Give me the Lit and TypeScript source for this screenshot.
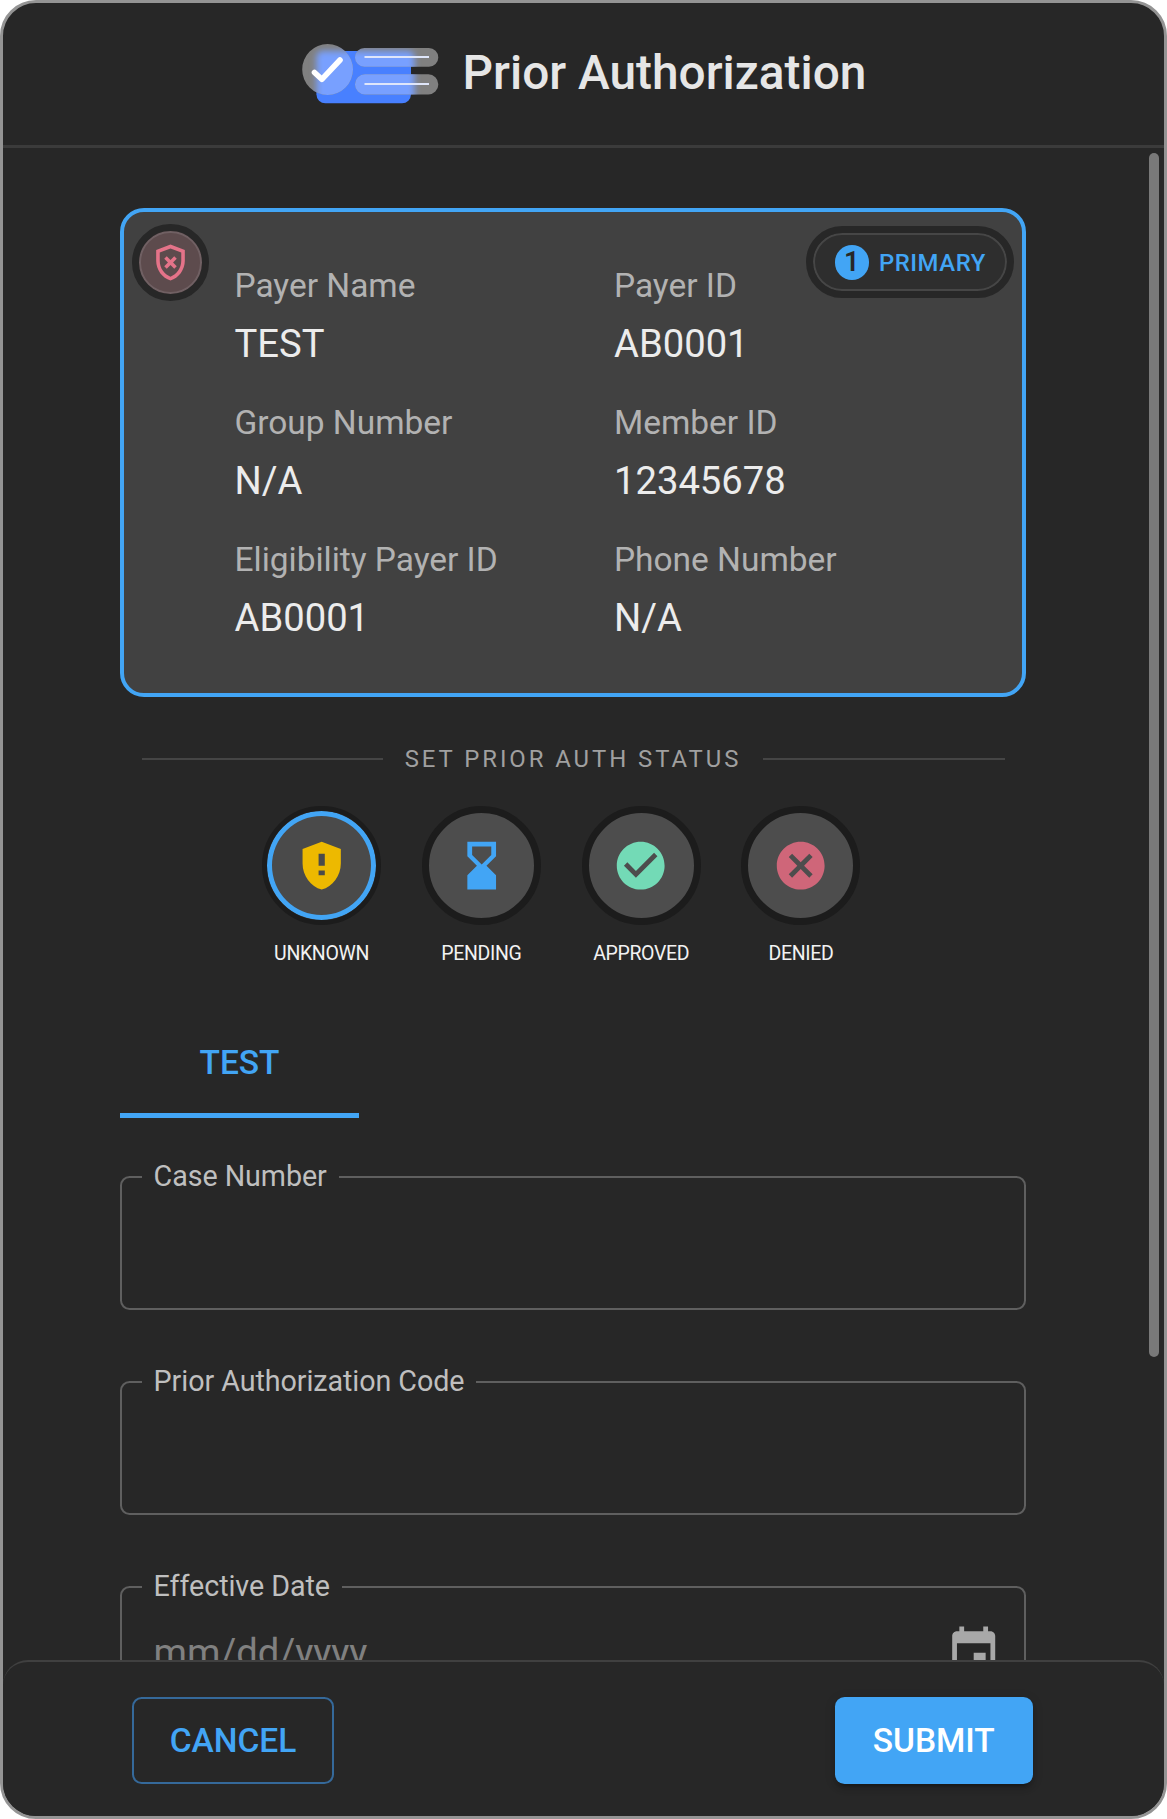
import { LitElement, html, css, svg } from "lit";
import { customElement, property } from "lit/decorators.js";

const ICONS: Record<string, string> = {
  shieldBad:
    "M12 2 4 5v6.09c0 5.05 3.41 9.76 8 10.91 4.59-1.15 8-5.86 8-10.91V5l-8-3zm6 9.09c0 4-2.55 7.7-6 8.83-3.45-1.13-6-4.82-6-8.83v-4.7l6-2.25 6 2.25v4.7zM9.91 8.5 8.5 9.91 10.59 12 8.5 14.09l1.41 1.41L12 13.42l2.09 2.08 1.41-1.41L13.42 12l2.08-2.09-1.41-1.41L12 10.59z",
  unknown:
    "M12 2 4 5v6.09c0 5.05 3.41 9.76 8 10.91 4.59-1.15 8-5.86 8-10.91V5l-8-3zm1.3 14h-2.6v-2h2.6v2zm0-4h-2.6V7h2.6v5z",
  pending:
    "M6 2v6h.01L6 8.01 10 12l-4 4 .01.01H6V22h12v-5.99h-.01L18 16l-4-4 4-3.99-.01-.01H18V2H6zM16 7.5l-4 4-4-4V4h8v3.5z",
  approved:
    "M12 2C6.48 2 2 6.48 2 12s4.48 10 10 10 10-4.48 10-10S17.52 2 12 2zm-2 15-5-5 1.41-1.41L10 14.17l7.59-7.59L19 8l-9 9z",
  denied:
    "M12 2C6.47 2 2 6.47 2 12s4.47 10 10 10 10-4.47 10-10S17.53 2 12 2zm5 13.59L15.59 17 12 13.41 8.41 17 7 15.59 10.59 12 7 8.41 8.41 7 12 10.59 15.59 7 17 8.41 13.41 12 17 15.59z",
  event:
    "M17 12h-5v5h5v-5zM16 1v2H8V1H6v2H5c-1.11 0-1.99.9-1.99 2L3 19c0 1.1.89 2 2 2h14c1.1 0 2-.9 2-2V5c0-1.1-.9-2-2-2h-1V1h-2zm3 18H5V8h14v11z",
};

@customElement("pa-icon")
class PaIcon extends LitElement {
  @property() name = "";
  static styles = css`
    :host { display: block; width: 57.4px; height: 57.4px; }
    svg { display: block; width: 100%; height: 100%; fill: currentColor; }
  `;
  render() {
    return html`<svg viewBox="0 0 24 24">${svg`<path d=${ICONS[this.name]}></path>`}</svg>`;
  }
}

@customElement("pa-field")
class PaField extends LitElement {
  @property() label = "";
  @property() placeholder = "";
  @property() icon = "";
  static styles = css`
    :host { display: block; height: 150px; }
    fieldset {
      box-sizing: border-box; height: 150px; margin: 0; min-width: 0;
      padding: 0 27px 0 19.6px; border: 2.4px solid #5f5f5f; border-radius: 9.6px;
    }
    legend {
      padding: 0 12px; height: 34px; font-size: 28.7px; line-height: 33px;
      letter-spacing: -0.07px; color: #bfbfbf;
    }
    .row {
      display: flex; align-items: center; justify-content: space-between;
      height: 97px; padding-left: 12px; color: #808080; font-size: 38.2px;
    }
    pa-icon { color: #a8a8a8; margin-right: -5.5px; }
  `;
  render() {
    return html`<fieldset>
      <legend>${this.label}</legend>
      <div class="row">
        <span>${this.placeholder}</span>
        ${this.icon ? html`<pa-icon name=${this.icon}></pa-icon>` : null}
      </div>
    </fieldset>`;
  }
}

const DETAILS = [
  ["Payer Name", "TEST"],
  ["Payer ID", "AB0001"],
  ["Group Number", "N/A"],
  ["Member ID", "12345678"],
  ["Eligibility Payer ID", "AB0001"],
  ["Phone Number", "N/A"],
];

const STATUSES = ["unknown", "pending", "approved", "denied"];

@customElement("app-root")
class AppRoot extends LitElement {
  static styles = css`
    :host { display: block; background: #fff; font-family: Roboto, "Liberation Sans", sans-serif; }
    * { box-sizing: border-box; }
    .dialog {
      position: relative; display: flex; flex-direction: column;
      width: 1167px; height: 1819px; overflow: hidden;
      border: 3px solid #949494; border-radius: 36px; background: #272727;
    }
    .header {
      flex: none; display: flex; align-items: center; justify-content: center; gap: 23.5px;
      height: 145px; padding-left: 1.5px; border-bottom: 3px solid #3b3b3b;
    }
    .logo { display: block; width: 137px; height: 60px; }
    .title {
      margin: 0 0 1.5px; font-size: 47.8px; line-height: 76px; font-weight: 500; color: #e6e6e6;
    }
    .body { flex: 1; min-height: 0; overflow: hidden; padding: 60px 138px 0 117px; }
    .scrollbar {
      position: absolute; top: 150px; right: 5px; width: 10px; height: 1204px;
      border-radius: 5px; background: #797979;
    }

    .card {
      position: relative; height: 489px; padding: 49.8px 24px 0 110.5px;
      border: 4px solid #42a5f5; border-radius: 24px; background: #414141;
    }
    .details { display: grid; grid-template-columns: 379.5px 1fr; row-gap: 26.5px; }
    .detail { display: flex; flex-direction: column; gap: 6px; margin-bottom: -0.7px; }
    .label { font-size: 33.5px; line-height: 48px; letter-spacing: -0.03px; color: #b2b2b2; }
    .value { font-size: 38.2px; line-height: 57.4px; color: #ececec; }
    .state {
      position: absolute; left: 8px; top: 12px; display: grid; place-items: center;
      width: 76.5px; height: 76.5px; border: 7px solid #272727; border-radius: 50%;
      background: #5d4b4d; box-shadow: inset 0 0 0 2px #706063; color: #e57389;
    }
    .state pa-icon { width: 43px; height: 43px; }
    .chip {
      position: absolute; right: 8px; top: 14px; display: flex; align-items: center; gap: 10px;
      width: 208px; height: 72px; padding: 1px 0 0 21.5px; border: 7px solid #272727;
      border-radius: 36px; background: #2e2e2e; box-shadow: inset 0 0 0 2px #464646;
      color: #42a5f5; font-size: 23.9px; font-weight: 500; letter-spacing: 0.55px;
    }
    .num {
      display: grid; place-items: center; width: 34.4px; height: 34.4px; border-radius: 50%;
      background: #42a5f5; color: #272727; font-size: 27px; font-weight: 600; letter-spacing: 0;
      line-height: 34px;
    }

    .divider {
      display: flex; align-items: center; gap: 21.5px; height: 40px; margin: 42px 21.5px 0;
      font-size: 23.9px; line-height: 40px; letter-spacing: 2.95px; color: #a0a0a0;
    }
    .line { flex: 1; height: 2px; background: #454545; }

    .statuses { display: flex; justify-content: center; margin: 27px 23.5px 0 0; }
    .status {
      display: flex; flex-direction: column; align-items: center; width: 159.8px;
      font-size: 19.5px; line-height: 28px; letter-spacing: -0.35px; color: #f2f2f2;
      text-transform: uppercase;
    }
    .disc {
      display: grid; place-items: center; width: 119px; height: 119px; margin-bottom: 14.5px;
      padding-top: 1px; border: 7.2px solid #1c1c1c; border-radius: 50%; background: #4d4d4d;
    }
    .disc.selected { border-width: 5px; background: #4a4a4a; box-shadow: inset 0 0 0 5px #42a5f5; }
    .unknown { color: #edb900; }
    .pending { color: #42a5f5; }
    .approved { color: #73dab6; }
    .denied { color: #cf6679; }

    .tab {
      display: flex; align-items: center; justify-content: center; width: 239px; height: 115px;
      margin-top: 35.5px; padding-top: 8px; border-bottom: 5px solid #42a5f5; color: #42a5f5;
      font-size: 33.5px; font-weight: 500;
    }
    .fields { display: flex; flex-direction: column; gap: 55.3px; margin-top: 41.7px; }

    .footer {
      flex: none; display: flex; align-items: center; justify-content: space-between;
      height: 156px; padding: 3px 131px 0 129px; border-top: 2.4px solid #404040;
      border-radius: 25px 25px 0 0; background: #272727;
    }
    button {
      height: 87px; padding: 0; border-radius: 9.6px; font-family: inherit; font-size: 33.5px;
      font-weight: 500; line-height: 58px;
    }
    .cancel { width: 202px; border: 2px solid #35699a; background: transparent; color: #42a5f5; }
    .submit {
      width: 198.5px; border: 0; background: #42a5f5; color: #fff;
      box-shadow: 0 7px 2px -5px rgba(0,0,0,.2), 0 5px 5px rgba(0,0,0,.14), 0 2px 12px rgba(0,0,0,.12);
    }
  `;

  render() {
    return html`<div class="dialog">
      <div class="header">
        <svg class="logo" viewBox="302 44 137 60">
          <defs>
            <filter id="soft" x="-20%" y="-20%" width="140%" height="140%"><feGaussianBlur stdDeviation="3"></feGaussianBlur></filter>
            <clipPath id="glass">
              <circle cx="327.6" cy="69.5" r="25.4"></circle>
              <rect x="355" y="48" width="83.3" height="18.8" rx="9.4"></rect>
              <rect x="355" y="74.3" width="83.3" height="20.2" rx="10"></rect>
            </clipPath>
          </defs>
          <rect x="316.4" y="51" width="94.6" height="52.3" rx="9" fill="#4880ff"></rect>
          <g clip-path="url(#glass)">
            <rect x="300" y="40" width="142" height="66" fill="#808080"></rect>
            <rect x="316.4" y="51" width="98" height="58" rx="6" fill="#78a0ff" filter="url(#soft)"></rect>
          </g>
          <path d="M364.5 57h64.5M364.5 84h64.5" stroke="#dfe6fa" stroke-width="2.2"></path>
          <path d="M314.5 72.5 321.8 79.3 340 60" fill="none" stroke="#fff" stroke-width="5.6" stroke-linecap="round" stroke-linejoin="round"></path>
        </svg>
        <h1 class="title">Prior Authorization</h1>
      </div>
      <div class="body">
        <div class="card">
          <div class="state"><pa-icon name="shieldBad"></pa-icon></div>
          <div class="chip"><span class="num">1</span>PRIMARY</div>
          <div class="details">
            ${DETAILS.map(([label, value]) => html`<div class="detail">
              <div class="label">${label}</div>
              <div class="value">${value}</div>
            </div>`)}
          </div>
        </div>
        <div class="divider"><span class="line"></span><span>SET PRIOR AUTH STATUS</span><span class="line"></span></div>
        <div class="statuses">
          ${STATUSES.map((s, i) => html`<div class="status">
            <div class="disc ${s} ${i === 0 ? "selected" : ""}"><pa-icon name=${s}></pa-icon></div>
            ${s}
          </div>`)}
        </div>
        <div class="tab">TEST</div>
        <div class="fields">
          <pa-field label="Case Number"></pa-field>
          <pa-field label="Prior Authorization Code"></pa-field>
          <pa-field label="Effective Date" placeholder="mm/dd/yyyy" icon="event"></pa-field>
        </div>
      </div>
      <div class="scrollbar"></div>
      <div class="footer">
        <button class="cancel">CANCEL</button>
        <button class="submit">SUBMIT</button>
      </div>
    </div>`;
  }
}
